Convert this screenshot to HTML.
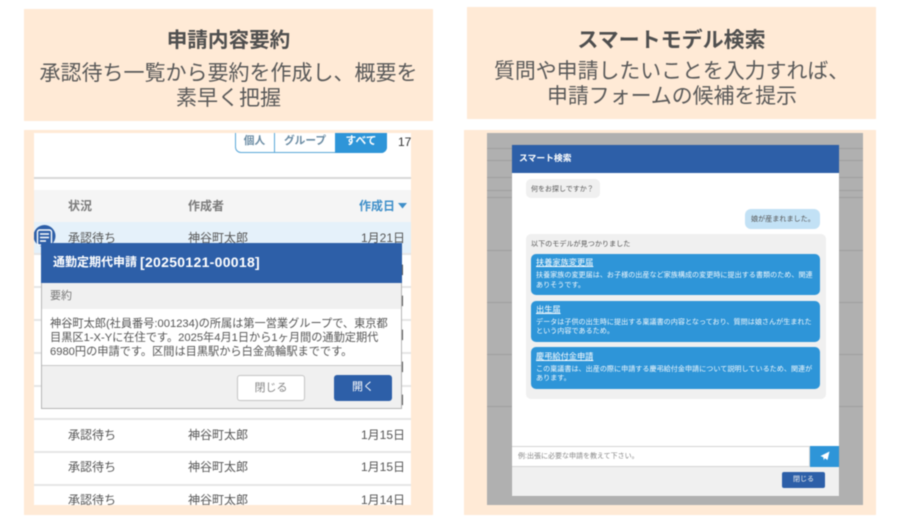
<!DOCTYPE html>
<html lang="ja"><head><meta charset="utf-8">
<style>
html,body{margin:0;padding:0;background:#fff}
#p{position:relative;width:900px;height:520px;overflow:hidden;font-family:"Liberation Sans","Noto Sans CJK JP",sans-serif;color:#555;filter:blur(.4px)}
#p div,#p svg{position:absolute;box-sizing:border-box}
.t{white-space:nowrap;line-height:1}
.c{text-align:center}
.pe{background:#ffead6}
.rl{left:34px;width:377px;height:2px;background:#e6e6e6}
.s,.n,.d{font-size:12px;color:#555}
.s{left:68px}.n{left:188px}.d{right:495px}
.ct{color:#fff;font-size:8.2px;left:536px;text-decoration:underline}
.cd{color:#f2f8fc;font-size:7.1px;left:536px;line-height:9.4px;white-space:nowrap}
.card{left:531px;width:289px;background:#2e95d8;border-radius:5px}
.bl{left:487px;width:376px;height:1px;background:#9f9f9f}
</style></head><body><div id="p">
<div class="pe" style="left:24px;top:9px;width:409px;height:112px"></div>
<div class="t c" style="left:24px;width:409px;top:31.400px;font-size:20.600px;font-weight:bold;color:#4f4f4f">申請内容要約</div>
<div class="t c" style="left:24px;width:409px;top:63px;font-size:21px;color:#595959">承認待ち一覧から要約を作成し、概要を</div>
<div class="t c" style="left:24px;width:409px;top:88px;font-size:21px;color:#595959">素早く把握</div>

<div class="pe" style="left:467px;top:7px;width:409px;height:112px"></div>
<div class="t c" style="left:467px;width:409px;top:29.500px;font-size:21px;font-weight:bold;color:#4f4f4f">スマートモデル検索</div>
<div class="t" style="left:494px;top:61.500px;font-size:20.900px;color:#595959">質問や申請したいことを入力すれば、</div>
<div class="t" style="left:547px;top:86.500px;font-size:20.900px;color:#595959">申請フォームの候補を提示</div>

<!-- left panel -->
<div class="pe" style="left:24px;top:130px;width:409px;height:385px"></div>
<div style="left:34px;top:133px;width:377px;height:372px;background:#fff;overflow:hidden"></div>
<div style="left:235px;top:130px;width:152px;height:23px;border:1px solid #5aa7d8;border-top:0;border-radius:0 0 6px 6px;background:#fff"></div>
<div style="left:274px;top:133px;width:1px;height:19px;background:#5aa7d8"></div>
<div style="left:335px;top:133px;width:52px;height:20px;background:#2e95d8;border-radius:0 0 6px 0"></div>
<div style="left:24px;top:130px;width:409px;height:3px;background:#ffead6"></div>
<div class="t c" style="left:235px;width:39px;top:136px;font-size:10.700px;font-weight:bold;color:#6a8ba3">個人</div>
<div class="t c" style="left:275px;width:60px;top:136px;font-size:10.700px;font-weight:bold;color:#6a8ba3">グループ</div>
<div class="t c" style="left:335px;width:52px;top:136px;font-size:10.700px;font-weight:bold;color:#fff">すべて</div>
<div class="t" style="left:398px;top:135.500px;font-size:12px;color:#333">17</div>
<div style="left:34px;top:177px;width:377px;height:2px;background:#d8d8d8"></div>
<div style="left:34px;top:190px;width:377px;height:32px;background:#f5f5f5"></div>
<div style="left:34px;top:222px;width:377px;height:31px;background:#e5f1fa"></div>
<div class="t" style="left:68px;top:200px;font-size:12px;font-weight:bold;color:#7a7a7a">状況</div>
<div class="t" style="left:188px;top:200px;font-size:12px;font-weight:bold;color:#7a7a7a">作成者</div>
<div class="t" style="left:359px;top:200px;font-size:12px;font-weight:bold;color:#3f8fc9">作成日</div>
<svg style="left:397.500px;top:203px" width="10" height="6"><path d="M0 0H9L4.500 5.500Z" fill="#3f8fc9"/></svg>
<div class="rl" style="top:253px"></div><div class="rl" style="top:286px"></div><div class="rl" style="top:319px"></div><div class="rl" style="top:352px"></div><div class="rl" style="top:385px"></div><div class="rl" style="top:418px"></div><div class="rl" style="top:451px"></div><div class="rl" style="top:484px"></div>
<div class="t s" style="top:231.500px">承認待ち</div><div class="t n" style="top:231.500px">神谷町太郎</div><div class="t d" style="top:231.500px">1月21日</div>
<div class="t d" style="top:264px">1月21日</div><div class="t d" style="top:295px">1月20日</div><div class="t d" style="top:329px">1月20日</div><div class="t d" style="top:361px">1月17日</div><div class="t d" style="top:394px">1月16日</div>
<div class="t s" style="top:428.500px">承認待ち</div><div class="t n" style="top:428.500px">神谷町太郎</div><div class="t d" style="top:428.500px">1月15日</div>
<div class="t s" style="top:461px">承認待ち</div><div class="t n" style="top:461px">神谷町太郎</div><div class="t d" style="top:461px">1月15日</div>
<div class="t s" style="top:493.500px;height:11.500px;overflow:hidden">承認待ち</div><div class="t n" style="top:493.500px;height:11.500px;overflow:hidden">神谷町太郎</div><div class="t d" style="top:493.500px;height:11.500px;overflow:hidden">1月14日</div>
<svg style="left:34px;top:225px" width="22" height="28"><circle cx="10.500" cy="11" r="11" fill="#2d5fa8"/><rect x="3.500" y="5" width="14" height="15" rx="2" fill="none" stroke="#fff" stroke-width="1.400"/><path d="M6 9H15M6 12.500H15M6 16H12" stroke="#fff" stroke-width="1.400"/></svg>
<!-- modal -->
<div style="left:41px;top:243px;width:361px;height:166px;background:#f0f0f0;border:1px solid #b5b5b5;border-top:0"></div>
<div style="left:41px;top:243px;width:361px;height:40px;background:#2d5fa8"></div>
<div class="t" style="left:53px;top:256px;font-size:12px;font-weight:bold;color:#fff">通勤定期代申請</div>
<div class="t" style="left:140px;top:255px;font-size:14px;letter-spacing:.3px;font-weight:bold;color:#fff">[20250121-00018]</div>
<div class="t" style="left:50px;top:291px;font-size:11px;color:#777">要約</div>
<div style="left:42px;top:309px;width:359px;height:57px;background:#fff;border-bottom:1px solid #c8c8c8"></div>
<div class="t" style="left:50px;top:318.500px;font-size:11.200px;color:#555">神谷町太郎(社員番号:001234)の所属は第一営業グループで、東京都</div>
<div class="t" style="left:50px;top:332.500px;font-size:11.200px;color:#555">目黒区1-X-Yに在住です。2025年4月1日から1ヶ月間の通勤定期代</div>
<div class="t" style="left:50px;top:346.500px;font-size:11.200px;color:#555">6980円の申請です。区間は目黒駅から白金高輪駅までです。</div>
<div class="t c" style="left:237px;top:375px;width:68px;height:26px;background:#fff;border:1px solid #c4c4c4;border-radius:3px;font-size:11px;line-height:24px;color:#888">閉じる</div>
<div class="t c" style="left:334px;top:375px;width:58px;height:26px;background:#2d5fa8;border-radius:3px;font-size:11px;line-height:25px;color:#fff">開く</div>

<!-- right panel -->
<div class="pe" style="left:464px;top:130px;width:412px;height:385px"></div>
<div style="left:487px;top:133px;width:376px;height:372px;background:#b0b0b0"></div>
<div class="bl" style="top:148px"></div>
<div class="bl" style="top:160px"></div>
<div class="bl" style="top:177px"></div>
<div class="bl" style="top:190px"></div>
<div class="bl" style="top:197px"></div>
<div class="bl" style="top:250px"></div>
<div class="bl" style="top:302px"></div>
<div class="bl" style="top:354px"></div>
<div class="bl" style="top:406px"></div>
<div style="left:512px;top:145px;width:327px;height:351px;background:#fff;box-shadow:0 0 1px #999"></div>
<div style="left:512px;top:145px;width:327px;height:28px;background:#2d5fa8"></div>
<div class="t" style="left:519px;top:154px;font-size:8.800px;font-weight:bold;color:#fff">スマート検索</div>
<div style="left:526px;top:179px;width:74px;height:19px;background:#f0f0f0;border-radius:5px"></div>
<div class="t" style="left:531px;top:185.500px;font-size:7px;color:#555">何をお探しですか？</div>
<div style="left:745px;top:209px;width:75px;height:20px;background:#c2e1f5;border-radius:6px"></div>
<div class="t" style="left:751px;top:215.800px;font-size:7.100px;color:#555">娘が産まれました。</div>
<div style="left:526px;top:234px;width:299.500px;height:165px;background:#f0f0f0;border-radius:5px"></div>
<div class="t" style="left:531px;top:240.500px;font-size:7.100px;color:#555">以下のモデルが見つかりました</div>
<div class="card" style="top:254px;height:41px"></div>
<div class="t ct" style="top:259px">扶養家族変更届</div>
<div class="cd" style="top:271.300px">扶養家族の変更届は、お子様の出産など家族構成の変更時に提出する書類のため、関連<br>ありそうです。</div>
<div class="card" style="top:300.500px;height:41.500px"></div>
<div class="t ct" style="top:306px">出生届</div>
<div class="cd" style="top:318px">データは子供の出生時に提出する稟議書の内容となっており、質問は娘さんが生まれた<br>という内容であるため。</div>
<div class="card" style="top:347px;height:41.500px"></div>
<div class="t ct" style="top:352.700px">慶弔給付金申請</div>
<div class="cd" style="top:364.600px">この稟議書は、出産の際に申請する慶弔給付金申請について説明しているため、関連が<br>あります。</div>
<div style="left:512px;top:446px;width:298px;height:21px;background:#fff;border:1px solid #d5d5d5;border-left:0"></div>
<div class="t" style="left:518px;top:452.800px;font-size:7px;color:#888">例:出張に必要な申請を教えて下さい。</div>
<div style="left:810px;top:446px;width:29px;height:21px;background:#2e95d8"></div>
<svg style="left:820px;top:451px" width="10" height="10"><path d="M9.500 .500L7.500 9L4.800 7.200L3.800 9.300L3.300 6.300L.500 5Z" fill="#fff"/></svg>
<div style="left:512px;top:467px;width:327px;height:29px;background:#f0f0f0"></div>
<div class="t c" style="left:782px;top:472px;width:43px;height:16px;background:#2d5fa8;border-radius:2px;font-size:7px;line-height:15px;color:#f0f0f0">閉じる</div>
</div></body></html>
